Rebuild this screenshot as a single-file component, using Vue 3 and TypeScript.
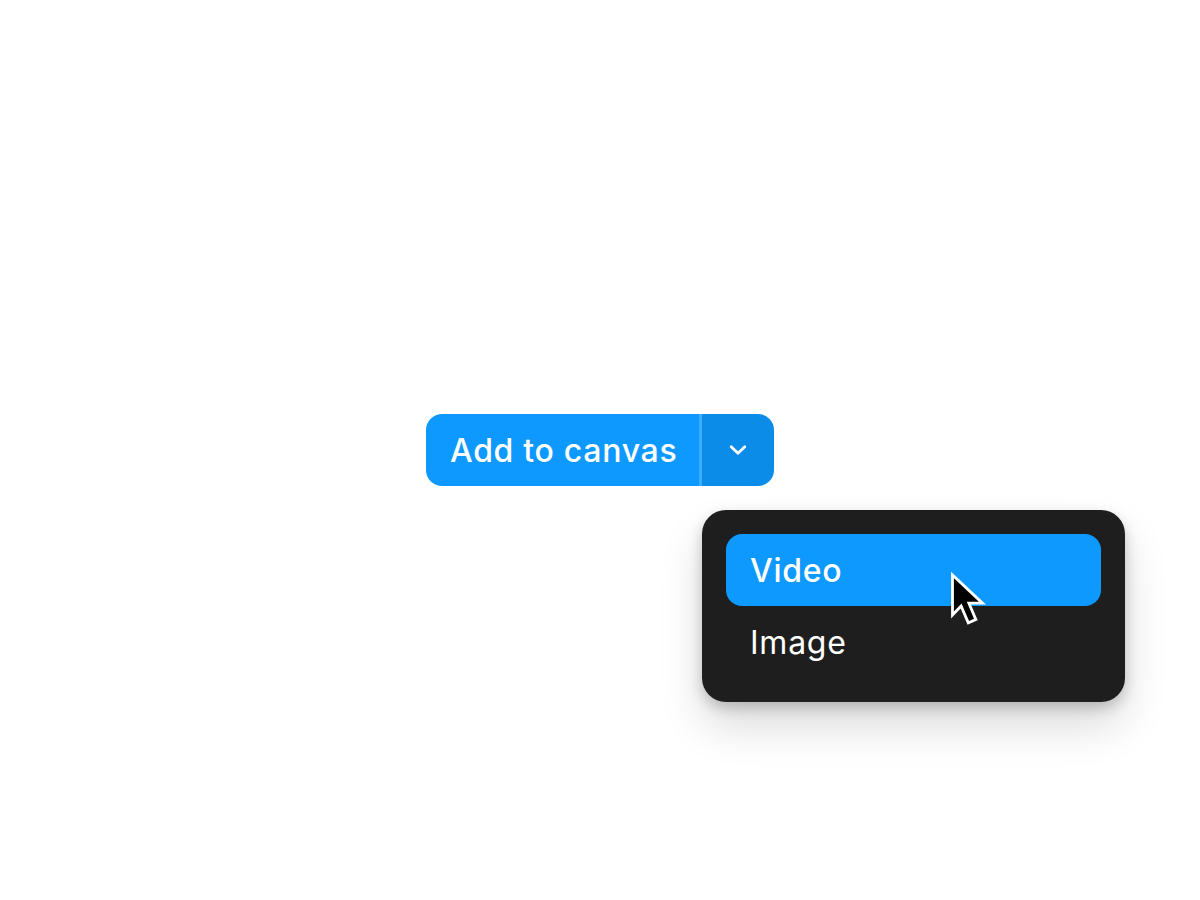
<template>
  <div class="page">
    <div class="split">
      <button class="main-btn">Add to canvas</button>
      <button class="caret-btn" aria-label="More options">
        <svg width="18" height="12" viewBox="0 0 18 12" fill="none">
          <path d="M2.2 2.8 9 9.2l6.8-6.4" stroke="#fff" stroke-width="2.8" stroke-linecap="round" stroke-linejoin="round" />
        </svg>
      </button>

      <div class="menu">
        <div
          v-for="item in items"
          :key="item"
          class="menu-item"
          :class="{ active: item === activeItem }"
        >
          {{ item }}
        </div>
        <svg class="cursor" width="40" height="60" viewBox="0 0 40 60">
          <path
            d="M3.5 5v40l8.6-9 7.2 16.8 7.6-3.2-7-16.4h13.6z"
            fill="#000"
            stroke="#fff"
            stroke-width="2.8"
          />
        </svg>
      </div>
    </div>
  </div>
</template>

<script setup lang="ts">
const items: string[] = ['Video', 'Image']
const activeItem = 'Video'
</script>

<style scoped>
.page {
  height: 900px;
  display: flex;
  align-items: center;
  justify-content: center;
  background: #fff;
  font-family: Inter, "Liberation Sans", sans-serif;
}

.split {
  position: relative;
  display: flex;
  height: 72px;
  width: 348px;
}

.main-btn {
  flex: 1;
  border: none;
  border-radius: 16px 0 0 16px;
  background: #0d99ff;
  color: #fff;
  font: 550 32px Inter, "Liberation Sans", sans-serif;
  letter-spacing: 0.7px;
  text-align: left;
  padding: 0 0 0 24px;
}

.caret-btn {
  width: 75px;
  display: flex;
  align-items: center;
  justify-content: center;
  border: none;
  border-left: 3px solid #3fadff;
  border-radius: 0 16px 16px 0;
  background: #0c8ce9;
  padding: 0;
}

.menu {
  position: absolute;
  top: 96px;
  left: 276px;
  width: 423px;
  box-sizing: border-box;
  padding: 24px;
  height: 192px;
  border-radius: 24px;
  background: #1e1e1e;
  box-shadow: 0 6px 14px rgba(0, 0, 0, 0.2), 0 24px 44px rgba(0, 0, 0, 0.14);
}

.menu-item {
  height: 72px;
  display: flex;
  align-items: center;
  padding: 0 24px;
  border-radius: 16px;
  color: #fff;
  font-size: 32px;
  font-weight: 430;
  letter-spacing: 0.75px;
}

.menu-item.active {
  background: #0d99ff;
  font-weight: 550;
}

.cursor {
  position: absolute;
  left: 247px;
  top: 60px;
}
</style>
